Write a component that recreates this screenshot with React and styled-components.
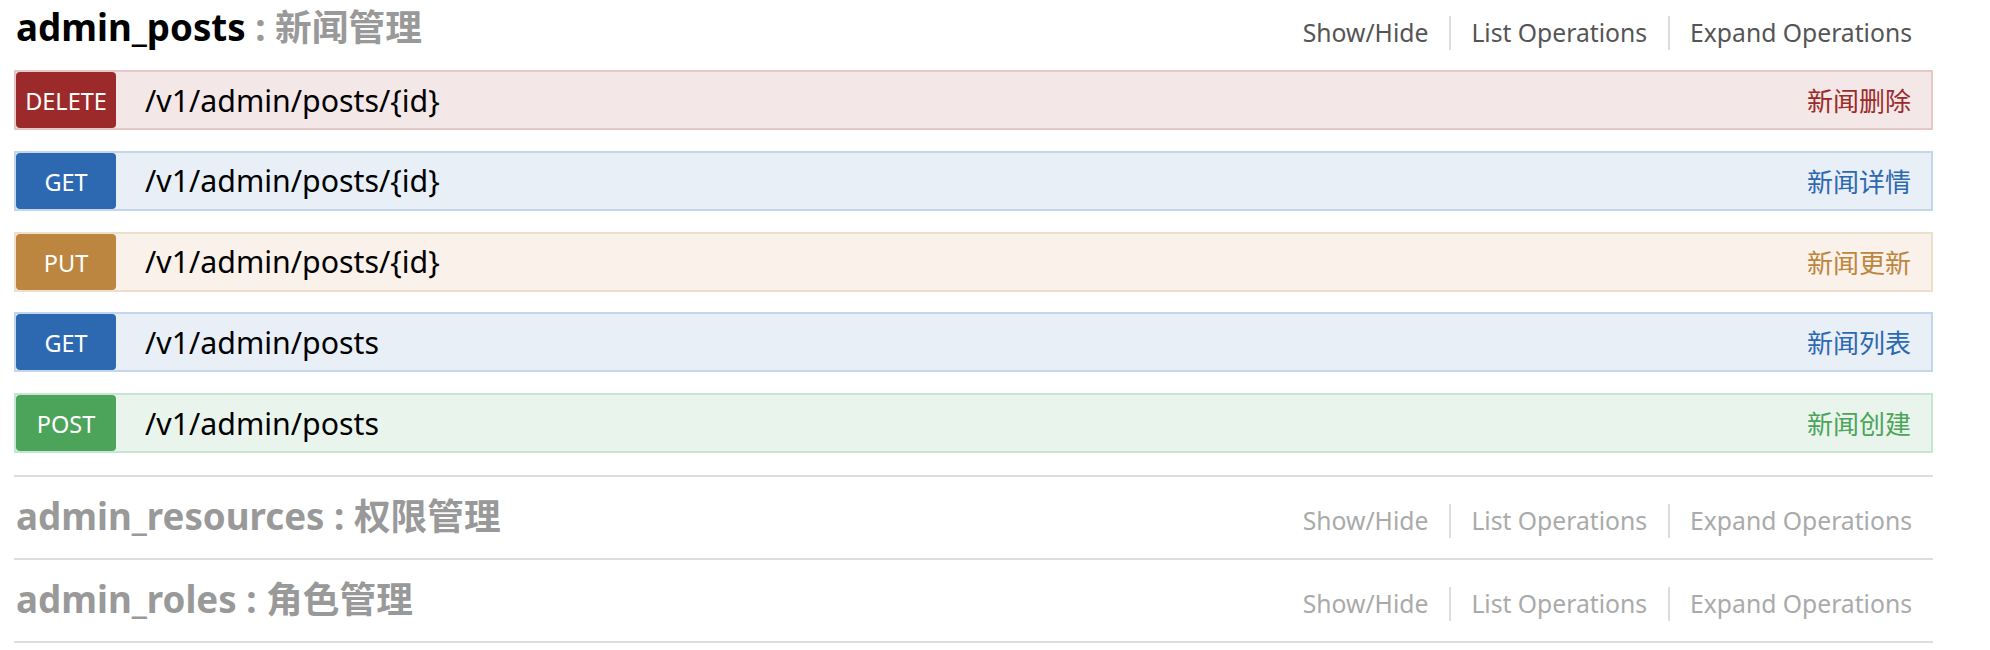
import React from "react";
import styled, { createGlobalStyle } from "styled-components";

const GlobalStyle = createGlobalStyle`
  body {
    margin: 0;
    background: #fff;
    font-family: "Noto Sans", "Noto Sans CJK SC", sans-serif;
  }
`;

const methods = {
  delete: { badge: "#9c2a2a", bg: "#f4e7e7", border: "#e6c6c7", text: "#9c2a2a" },
  get: { badge: "#2d69b0", bg: "#e8eff7", border: "#c4d7ea", text: "#2d69b0" },
  put: { badge: "#bc8640", bg: "#f9f1ea", border: "#eddfcb", text: "#bc8640" },
  post: { badge: "#4ca45a", bg: "#e9f5ec", border: "#c5e6d0", text: "#4ca45a" },
};

const resources = [
  {
    name: "admin_posts",
    desc: "新闻管理",
    active: true,
    operations: [
      { method: "delete", path: "/v1/admin/posts/{id}", summary: "新闻删除" },
      { method: "get", path: "/v1/admin/posts/{id}", summary: "新闻详情" },
      { method: "put", path: "/v1/admin/posts/{id}", summary: "新闻更新" },
      { method: "get", path: "/v1/admin/posts", summary: "新闻列表" },
      { method: "post", path: "/v1/admin/posts", summary: "新闻创建" },
    ],
  },
  { name: "admin_resources", desc: "权限管理" },
  { name: "admin_roles", desc: "角色管理" },
];

const App = () => {
  return (
    <>
      <GlobalStyle />
      <Page>
        <ResourceList>
          {resources.map((res) => (
            <Resource key={res.name}>
              <Heading>
                <Title>
                  <Name $active={res.active}>{res.name}</Name>
                  <Desc> : {res.desc}</Desc>
                </Title>
                <Options $active={res.active}>
                  <Option $active={res.active}>Show/Hide</Option>
                  <Option $active={res.active}>List Operations</Option>
                  <Option $active={res.active}>Expand Operations</Option>
                </Options>
              </Heading>
              {res.operations && (
                <Endpoints>
                  {res.operations.map((op, i) => (
                    <Operation key={i} $m={methods[op.method]}>
                      <Method $m={methods[op.method]}>{op.method}</Method>
                      <Path>{op.path}</Path>
                      <Summary $m={methods[op.method]}>{op.summary}</Summary>
                    </Operation>
                  ))}
                </Endpoints>
              )}
            </Resource>
          ))}
        </ResourceList>
      </Page>
    </>
  );
};

const Page = styled.div`
  width: 1919px;
  margin-top: -12px;
  padding-left: 14px;
`;

const ResourceList = styled.ul`
  list-style: none;
  margin: 0;
  padding: 0;
`;

const Resource = styled.li`
  border-bottom: 2px solid #dddddd;
`;

const Heading = styled.div`
  box-sizing: border-box;
  height: 81px;
  padding-top: 16px;
  display: flex;
  justify-content: space-between;
  align-items: flex-start;
`;

const Title = styled.h2`
  margin: 3px 0 0;
  padding-left: 2px;
  font-size: 36.7px;
  line-height: 40px;
  font-weight: 700;
  color: #999;
`;

const Name = styled.span`
  color: ${(p) => (p.$active ? "#000" : "#999")};
`;

const Desc = styled.span`
  color: #999;
`;

const Options = styled.ul`
  list-style: none;
  margin: ${(p) => (p.$active ? "12px" : "11px")} 0 0;
  padding: 0;
  display: flex;
`;

const Option = styled.li`
  padding: 3px 21px 3px 20px;
  font-size: 24.7px;
  line-height: 28px;
  color: ${(p) => (p.$active ? "#555" : "#aaa")};
  & + & {
    border-left: 2px solid #dddddd;
  }
`;

const Endpoints = styled.ul`
  list-style: none;
  margin: 1px 0 0;
  padding: 0 0 1px;
`;

const Operation = styled.li`
  box-sizing: border-box;
  height: 60px;
  margin-bottom: 20.8px;
  display: flex;
  align-items: center;
  background: ${(p) => p.$m.bg};
  border: 2px solid ${(p) => p.$m.border};
`;

const Method = styled.span`
  align-self: stretch;
  width: 100px;
  padding-top: 2px;
  box-sizing: border-box;
  display: flex;
  align-items: center;
  justify-content: center;
  background: ${(p) => p.$m.badge};
  border-radius: 4px;
  color: #fff;
  font-size: 23.5px;
  text-transform: uppercase;
`;

const Path = styled.span`
  margin-left: 29px;
  font-size: 30.3px;
  color: #000;
`;

const Summary = styled.span`
  margin-left: auto;
  padding-right: 20px;
  font-size: 26px;
  color: ${(p) => p.$m.text};
`;

export default App;
